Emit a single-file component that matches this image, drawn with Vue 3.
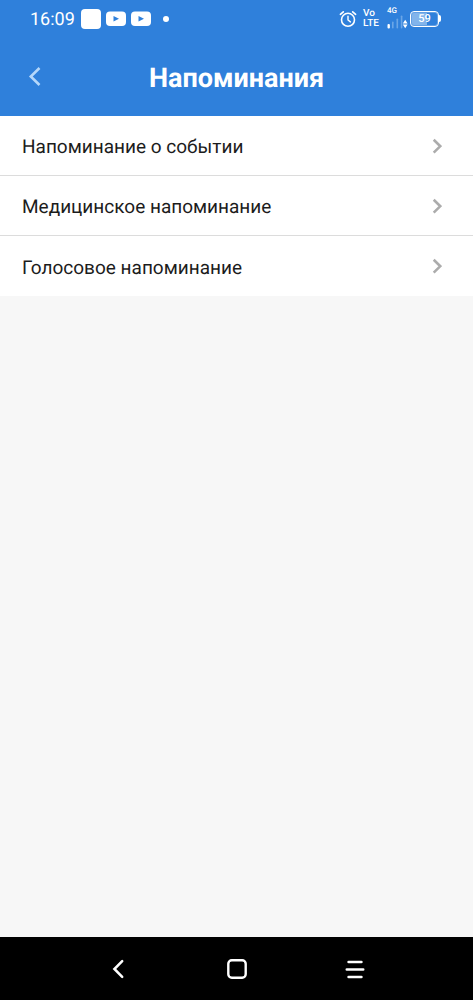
<script setup>
const reminders = [
  { id: 'event', title: 'Напоминание о событии' },
  { id: 'medical', title: 'Медицинское напоминание' },
  { id: 'voice', title: 'Голосовое напоминание' },
]
</script>

<template>
  <div class="screen">
    <div class="status">
      <div class="status-left">
        <time class="clock">16:09</time>
        <span class="app-square"></span>
        <svg v-for="n in 2" :key="n" class="video" width="20" height="16" viewBox="0 0 20 16" aria-hidden="true">
          <rect x="0" y="0.5" width="20" height="14.5" rx="4" fill="#fff" />
          <path d="M7.5 5 L13 7.8 L7.5 10.6 Z" fill="#2f80db" />
        </svg>
        <span class="dot"></span>
      </div>
      <div class="status-right">
        <svg width="18" height="18" viewBox="0 0 18 18" fill="none" stroke="#fff" stroke-linecap="round" aria-hidden="true">
          <circle cx="9" cy="9.8" r="6.5" stroke-width="1.6" />
          <path d="M9 6.3 V10 L11.4 11.9" stroke-width="1.4" />
          <path d="M1.4 4.3 L4.3 1.8 M16.6 4.3 L13.7 1.8" stroke-width="1.7" />
        </svg>
        <span class="volte"><span>Vo</span><span>LTE</span></span>
        <div class="signal">
          <span class="net">4G</span>
          <svg width="21" height="14" viewBox="0 0 21 14" aria-hidden="true">
            <rect x="0.5" y="9" width="2.4" height="4.5" rx="1" fill="#fff" />
            <g fill="#6ba6e7">
              <rect x="5" y="6.5" width="1.6" height="7" rx="0.8" />
              <rect x="9.5" y="3.5" width="1.6" height="10" rx="0.8" />
              <rect x="13.8" y="0.5" width="1.6" height="13" rx="0.8" />
            </g>
            <path d="M15.8 8.4 L18.2 4.8 L20.6 8.4 Z M15.8 9.6 L18.2 13.2 L20.6 9.6 Z" fill="#fff" />
          </svg>
        </div>
        <div class="battery"><span class="cell">59</span><span class="tip"></span></div>
      </div>
    </div>

    <header class="header">
      <button class="back" type="button" aria-label="Назад">
        <svg width="14" height="20" viewBox="0 0 14 20" aria-hidden="true">
          <path d="M11.5 1 L2.8 9.5 L11.5 18" fill="none" stroke="#b5d7fa" stroke-width="2.6" />
        </svg>
      </button>
      <h1>Напоминания</h1>
    </header>

    <main class="content">
      <ul class="list">
        <li v-for="item in reminders" :key="item.id">
          <button class="row" type="button">
            <span class="label">{{ item.title }}</span>
            <svg width="10" height="16" viewBox="0 0 10 16" aria-hidden="true">
              <path d="M1.7 1.8 L8.3 8.2 L1.7 14.6" fill="none" stroke="#acacac" stroke-width="2.6" />
            </svg>
          </button>
        </li>
      </ul>
    </main>

    <nav class="system-nav">
      <button type="button" aria-label="Назад">
        <svg width="20" height="20" viewBox="0 0 20 20" aria-hidden="true">
          <path d="M14.2 2.2 L6.4 10 L14.2 17.8" fill="none" stroke="#fff" stroke-width="2.5" stroke-linecap="round" />
        </svg>
      </button>
      <button type="button" aria-label="Домой">
        <svg width="20" height="20" viewBox="0 0 20 20" aria-hidden="true">
          <rect x="1.3" y="1.3" width="17.4" height="17.4" rx="3.5" fill="none" stroke="#fff" stroke-width="2.4" />
        </svg>
      </button>
      <button type="button" aria-label="Недавние">
        <svg width="20" height="20" viewBox="0 0 20 20" aria-hidden="true">
          <path d="M3.6 3 H16.4 M1.8 10.5 H18.2 M3.6 18 H16.4" fill="none" stroke="#fff" stroke-width="2.6" stroke-linecap="round" />
        </svg>
      </button>
    </nav>
  </div>
</template>

<style>
body {
  background: #f7f7f7;
}
</style>

<style scoped>
.screen {
  display: flex;
  flex-direction: column;
  min-height: 100vh;
  font-family: Roboto, "Noto Sans", sans-serif;
  text-rendering: geometricPrecision;
  background: #f7f7f7;
}
button {
  margin: 0;
  padding: 0;
  border: 0;
  background: none;
  font: inherit;
  color: inherit;
  text-rendering: inherit;
  cursor: pointer;
}
svg {
  display: block;
  flex: none;
}
.status {
  display: flex;
  justify-content: space-between;
  align-items: center;
  height: 37px;
  padding: 0 32px 0 30px;
  background: #2f80db;
  color: #fff;
}
.status-left {
  display: flex;
  align-items: center;
  gap: 5px;
}
.clock {
  padding: 2px 1px 0 0;
  font-size: 18px;
  line-height: 24px;
}
.app-square {
  width: 20px;
  height: 20px;
  border-radius: 4px;
  background: #fff;
}
.dot {
  width: 6px;
  height: 6px;
  margin-left: 7px;
  border-radius: 50%;
  background: #fff;
}
.status-right {
  display: flex;
  align-items: center;
}
.volte {
  display: flex;
  flex-direction: column;
  margin: 0 8px 0 6px;
  font-size: 10px;
  font-weight: 500;
  line-height: 10px;
}
.signal {
  display: flex;
  flex-direction: column;
  width: 21px;
  margin-right: 2px;
  padding-bottom: 2px;
}
.net {
  font-size: 8px;
  font-weight: 500;
  line-height: 8px;
}
.battery {
  display: flex;
  align-items: center;
}
.cell {
  box-sizing: border-box;
  width: 29px;
  height: 16px;
  padding: 1px;
  border: 1px solid #fff;
  outline: 1px solid rgb(255 255 255 / 25%);
  outline-offset: -2px;
  border-radius: 4px;
  background: linear-gradient(90deg, #82b4eb 59%, #2f80db 59%) content-box;
  font-size: 11px;
  font-weight: 500;
  line-height: 12px;
  text-align: center;
}
.tip {
  width: 2px;
  height: 7px;
  border-radius: 0 2px 2px 0;
  background: #fff;
}
.header {
  display: grid;
  grid-template-columns: 48px 1fr 48px;
  align-items: center;
  height: 79px;
  box-sizing: border-box;
  background: #2f80db;
  color: #fff;
}
.back {
  display: flex;
  align-items: center;
  height: 48px;
  padding-left: 28px;
}
h1 {
  margin: 0;
  padding-top: 2px;
  font-size: 27px;
  font-weight: 700;
  line-height: 32px;
  text-align: center;
}
.content {
  flex: 1;
}
.list {
  margin: 0;
  padding: 0;
  list-style: none;
  background: #fff;
}
.list li + li {
  border-top: 1px solid #dcdcdc;
}
.row {
  display: flex;
  align-items: center;
  justify-content: space-between;
  width: 100%;
  height: 59px;
  padding: 0 31px 0 22px;
  font-size: 19px;
  line-height: 24px;
  text-align: left;
  color: #1c1c1c;
}
.label {
  padding-top: 3px;
}
.list li:last-child .row {
  height: 60px;
}
.system-nav {
  display: grid;
  grid-template-columns: repeat(3, 1fr);
  height: 63px;
  padding: 0 12.5%;
  background: #000;
}
.system-nav button {
  display: flex;
  align-items: center;
  justify-content: center;
}
</style>
